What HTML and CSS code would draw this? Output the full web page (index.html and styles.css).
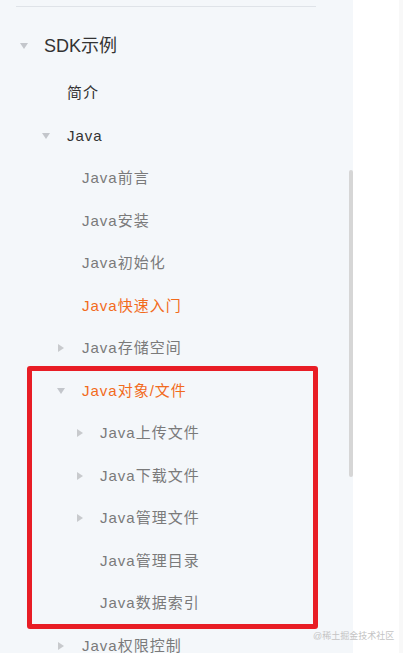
FILE: index.html
```html
<!DOCTYPE html>
<html>
  <head>
    <meta charset="utf-8">
    <meta name="viewport" content="width=device-width, initial-scale=1">
    <title>SDK示例</title>
    <link rel="stylesheet" href="styles.css">
  </head>
  <body>

    <div class="page">
      <nav class="sidebar">
	<div class="divider"></div>
	<ul class="tree">
	  <li class="open">
	    <div class="row lv1"><i class="caret"></i>SDK示例</div>
	    <ul>
	      <li><div class="row lv2">简介</div></li>
	      <li class="open">
		<div class="row lv2"><i class="caret"></i>Java</div>
		<ul>
		  <li><div class="row lv3">Java前言</div></li>
		  <li><div class="row lv3">Java安装</div></li>
		  <li><div class="row lv3">Java初始化</div></li>
		  <li><div class="row lv3 active">Java快速入门</div></li>
		  <li class="closed"><div class="row lv3"><i class="caret"></i>Java存储空间</div></li>
		  <li class="open marked">
		    <div class="row lv3 active"><i class="caret"></i>Java对象/文件</div>
		    <ul>
		      <li class="closed"><div class="row lv4"><i class="caret"></i>Java上传文件</div></li>
		      <li class="closed"><div class="row lv4"><i class="caret"></i>Java下载文件</div></li>
		      <li class="closed"><div class="row lv4"><i class="caret"></i>Java管理文件</div></li>
		      <li><div class="row lv4">Java管理目录</div></li>
		      <li><div class="row lv4">Java数据索引</div></li>
		    </ul>
		  </li>
		  <li class="closed"><div class="row lv3"><i class="caret"></i>Java权限控制</div></li>
		</ul>
	      </li>
	    </ul>
	  </li>
	</ul>
	<div class="scrollbar"></div>
      </nav>
      <main class="content"></main>
      <span class="watermark">@稀土掘金技术社区</span>
    </div>

  </body>
</html>
```

FILE: styles.css
```css
      html,
      body {
	  margin: 0;
	  height: 100%;
	  overflow: hidden;
      }

      body {
	  font-family: "Liberation Sans", "Noto Sans CJK SC", sans-serif;
	  background: #fff;
      }

      .page {
	  display: flex;
	  height: 653px;
	  position: relative;
      }

      .sidebar {
	  width: 353px;
	  flex-shrink: 0;
	  background: #f4f7fa;
	  position: relative;
	  overflow: hidden;
      }

      .content {
	  flex: 1;
	  background: #fff;
	  border-right: 4px solid #f8f8f8;
      }

      .divider {
	  margin: 6px 0 0 16px;
	  width: 300px;
	  height: 1px;
	  background: #dfe3e8;
      }

      .scrollbar {
	  position: absolute;
	  top: 170px;
	  right: 0;
	  width: 4px;
	  height: 307px;
	  background: #d6d6d6;
	  border-radius: 2px;
      }

      .tree,
      .tree ul {
	  list-style: none;
	  margin: 0;
	  padding: 0;
      }

      .tree {
	  margin-top: 19px;
      }

      .row {
	  position: relative;
	  height: 42.5px;
	  line-height: 42.5px;
	  font-size: 15px;
	  letter-spacing: 1px;
	  white-space: nowrap;
      }

      .lv1 {
	  height: 40px;
	  line-height: 40px;
	  margin-bottom: 6px;
	  padding-left: 44px;
	  font-size: 18px;
	  letter-spacing: 0;
	  color: #333;
      }

      .lv2 {
	  padding-left: 67px;
	  color: #333;
      }

      .lv3 {
	  padding-left: 82px;
	  color: #7a7a7a;
      }

      .lv4 {
	  padding-left: 100px;
	  color: #7a7a7a;
      }

      .row.active {
	  color: #f26b1d;
      }

      .caret {
	  position: absolute;
	  top: 50%;
	  width: 0;
	  height: 0;
      }

      .open > .row > .caret {
	  margin-top: -3px;
	  border-left: 4px solid transparent;
	  border-right: 4px solid transparent;
	  border-top: 6px solid #c3c6cb;
      }

      .closed > .row > .caret {
	  margin-top: -4px;
	  border-top: 4px solid transparent;
	  border-bottom: 4px solid transparent;
	  border-left: 6px solid #c8cacd;
      }

      .lv1 .caret {
	  left: 20px;
      }

      .lv2 .caret {
	  left: 42px;
      }

      .lv3 .caret {
	  left: 57px;
      }

      .closed > .lv3 .caret {
	  left: 58px;
      }

      .lv4 .caret {
	  left: 77px;
      }

      .marked {
	  position: relative;
      }

      .marked::after {
	  content: "";
	  position: absolute;
	  top: -4px;
	  bottom: -4px;
	  left: 27px;
	  width: 281px;
	  border: 5px solid #e81d25;
	  border-radius: 3px;
	  pointer-events: none;
      }

      .watermark {
	  position: absolute;
	  left: 313px;
	  top: 629px;
	  font-size: 9px;
	  color: #c4c4c4;
	  white-space: nowrap;
      }
```
